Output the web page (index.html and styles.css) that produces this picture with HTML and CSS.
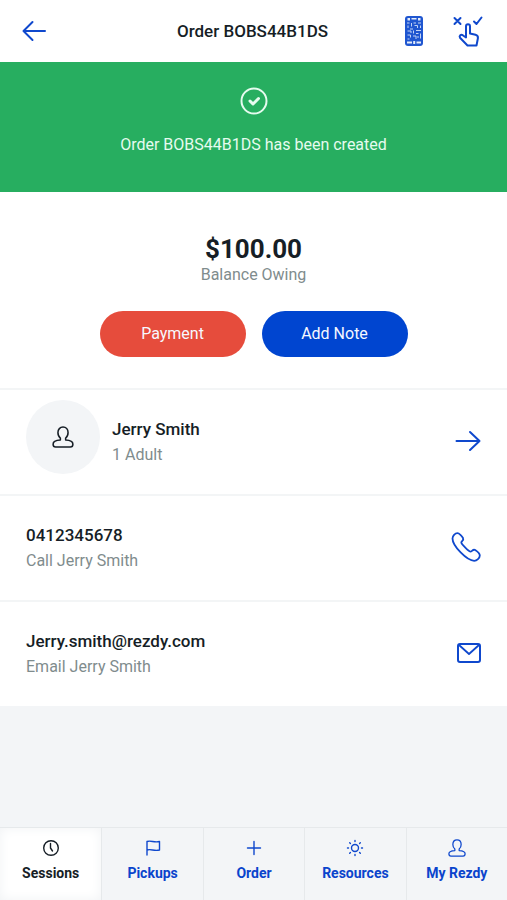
FILE: index.html
```html
<!DOCTYPE html>
<html lang="en">
<head>
<meta charset="utf-8">
<meta name="viewport" content="width=device-width, initial-scale=1">
<title>Order BOBS44B1DS</title>
<link rel="stylesheet" href="styles.css">
</head>
<body>
<svg class="sprite" aria-hidden="true">
  <symbol id="person" viewBox="0 0 20 20">
    <path d="M7.600 12.800v-1.800C6.200 10 5.400 8.200 5.400 6c0-3 1.900-5 4.600-5s4.600 2 4.600 5c0 2.200-.8 4-2.200 5v1.800c4 .2 6.600 1.300 6.600 3.700 0 1.600-.7 2.500-2.300 2.500H3.300C1.700 19 1 18.100 1 16.500c0-2.400 2.600-3.500 6.600-3.700z"/>
  </symbol>
</svg>
<div class="app">
  <header class="topbar">
    <button class="icon-button" type="button" aria-label="Back">
      <svg class="icon" width="24" height="22" viewBox="0 0 24 22"><path class="bold" d="M23 11H1.500M10.500 2l-9 9 9 9"/></svg>
    </button>
    <h1 class="title">Order BOBS44B1DS</h1>
    <div class="tools">
      <button class="icon-button" type="button" aria-label="Scan code">
        <svg class="icon" width="20" height="30" viewBox="0 0 20 30">
          <rect class="fill" x="1" y="0" width="18" height="30" rx="3"/>
          <path class="cut" d="M3.500 2h2.500v2.500H3.500zM7.500 2h5v1.500h-5zM14 2h2.500v2.500H14zM3 25.500h5v2H3zM9.200 25h2v3h-2zM12.500 25.500H17v2h-4.500z"/>
          <path class="code" d="M3 7h2.500M7.500 7v3.500M9.500 7h2.500M14 7h3M4 9.500v2.500M10.500 9.500h3v2.500M16.500 9.500V12M6 13h3M12 14.500h5M3.500 15h3.500v2M9.500 14.500v3M12 17.500h2.500M3.500 19h3v2.500M9 20h3v3M14 20v2M16.500 17.500v5M3.500 23h2"/>
        </svg>
      </button>
      <button class="icon-button" type="button" aria-label="Check in">
        <svg class="icon" width="30" height="31" viewBox="0 0 30 31">
          <path class="bold" d="M1.500 2l6 6M7.500 2l-6 6M21 5.500L23.500 8l5-6.500"/>
          <path class="bold" d="M13 21.500v-11c0-3 4-3 4 0v7l5.500 1.300c2 .5 2.700 1.700 2.400 3.500L23.500 29.500h-9L7 21.800c-1.200-2 1-3.600 2.700-2.600L13 21.500z"/>
        </svg>
      </button>
    </div>
  </header>
  <section class="notice" role="status">
    <svg class="notice-icon" width="28" height="28" viewBox="0 0 28 28"><circle cx="14" cy="14" r="12.500"/><path d="M10 14l3 3 5.500-5.500"/></svg>
    <p class="notice-text">Order BOBS44B1DS has been created</p>
  </section>
  <main>
    <section class="balance">
      <p class="amount">$100.00</p>
      <p class="muted">Balance Owing</p>
      <div class="actions">
        <button class="pill pay" type="button">Payment</button>
        <button class="pill note" type="button">Add Note</button>
      </div>
    </section>
    <a class="row" href="#guest">
      <span class="avatar"><svg class="icon dark" width="22" height="22" viewBox="0 0 20 20"><use href="#person"/></svg></span>
      <span class="details"><strong class="name">Jerry Smith</strong><span class="muted">1 Adult</span></span>
      <span class="row-icon"><svg class="icon" width="26" height="22" viewBox="0 0 26 22"><path class="bold" d="M1.500 11h23M15 2l9.500 9-9.500 9"/></svg></span>
    </a>
    <a class="row" href="tel:0412345678">
      <span class="details"><strong class="name">0412345678</strong><span class="muted">Call Jerry Smith</span></span>
      <span class="row-icon"><svg class="icon" width="30" height="30" viewBox="0 0 30 30"><path class="medium" d="M1.500 6.500C1.500 3.800 4 1.200 6.500 1.200c1.500 0 4.500 3 5.500 4.800 1.200 2.200-1.700 3.300-1.700 4.500 0 1.500 7.700 9.200 9.200 9.200 1.300 0 2.500-3 4.700-1.700 1.500 1 4.600 3.800 4.600 5.500 0 2.500-3 5.300-5.600 5.300C16 28.800 1.500 14 1.500 6.500z"/></svg></span>
    </a>
    <a class="row" href="mailto:Jerry.smith@rezdy.com">
      <span class="details"><strong class="name">Jerry.smith@rezdy.com</strong><span class="muted">Email Jerry Smith</span></span>
      <span class="row-icon"><svg class="icon" width="24" height="20" viewBox="0 0 24 20"><rect class="bold" x="1" y="1" width="22" height="18" rx="2"/><path class="medium" d="M2 2l10 9L22 2"/></svg></span>
    </a>
  </main>
  <nav class="tabs">
    <a class="tab active" href="#sessions" aria-current="page">
      <svg class="icon" width="18" height="18" viewBox="0 0 18 18"><circle cx="9" cy="9" r="7.300"/><path d="M8.500 4.500V9l2 3"/></svg>Sessions</a>
    <a class="tab" href="#pickups">
      <svg class="icon" width="18" height="18" viewBox="0 0 18 18"><path d="M3 16V2.500c4-1.500 7 1.500 12.500 0V11C10 12.500 7 9.500 3 11"/></svg>Pickups</a>
    <a class="tab" href="#order">
      <svg class="icon" width="18" height="18" viewBox="0 0 18 18"><path d="M2.500 9h13M9 2.500v13"/></svg>Order</a>
    <a class="tab" href="#resources">
      <svg class="icon" width="18" height="18" viewBox="0 0 18 18"><circle cx="9" cy="9" r="3.500"/><path d="M9 1.500v1M9 15.500v1M1.500 9h1M15.500 9h1M3.700 3.700l.7.700M13.600 13.600l.7.700M3.700 14.300l.7-.7M13.600 4.400l.7-.7"/></svg>Resources</a>
    <a class="tab" href="#account">
      <svg class="icon" width="18" height="18" viewBox="0 0 20 20"><use href="#person"/></svg>My Rezdy</a>
  </nav>
</div>
</body>
</html>
```
FILE: styles.css
```css
* {
  box-sizing: border-box;
}

body {
  margin: 0;
  background: #f3f5f7;
  color: #161e26;
  font-family: Roboto, "Liberation Sans", sans-serif;
  font-size: 16px;
  line-height: 20px;
}

h1,
p {
  margin: 0;
}

button {
  border: 0;
  font: inherit;
  cursor: pointer;
}

a {
  color: inherit;
  text-decoration: none;
}

.sprite {
  position: absolute;
  width: 0;
  height: 0;
}

.app {
  display: flex;
  flex-direction: column;
  min-height: 100vh;
}

.icon {
  display: block;
  fill: none;
  stroke: #0f48cd;
  stroke-width: 1.4;
  stroke-linecap: round;
  stroke-linejoin: round;
}

.icon.dark {
  stroke: #161e26;
}

.icon .bold {
  stroke-width: 2;
}

.icon .medium {
  stroke-width: 1.8;
}

.icon .fill {
  fill: #1f56d0;
  stroke: none;
}

.icon .cut {
  fill: #e4ecfa;
  stroke: none;
}

.icon .code {
  stroke: #c3d3f4;
  stroke-width: 1;
  stroke-linecap: butt;
  stroke-linejoin: miter;
}

.topbar {
  display: grid;
  grid-template-columns: 1fr auto 1fr;
  align-items: center;
  height: 62px;
  padding: 0 24px 0 22px;
  background: #fff;
}

.icon-button {
  justify-self: start;
  padding: 0;
  background: none;
}

.title {
  font-size: 17px;
  font-weight: 500;
}

.tools {
  display: flex;
  justify-content: flex-end;
  gap: 29px;
}

.notice {
  display: flex;
  flex-direction: column;
  align-items: center;
  gap: 20px;
  padding: 25px 16px 37px;
  background: #27ae60;
  color: #e6fbef;
}

.notice-icon {
  fill: none;
  stroke: #e6fbef;
  stroke-width: 2;
  stroke-linecap: round;
  stroke-linejoin: round;
}

.notice-icon path {
  stroke-width: 3;
}

.balance {
  padding: 41px 16px 31px;
  background: #fff;
  text-align: center;
}

.amount {
  font-size: 26px;
  font-weight: 700;
  line-height: 32px;
}

.muted {
  color: #7f8c8d;
}

.actions {
  display: flex;
  justify-content: center;
  gap: 16px;
  margin-top: 26px;
}

.pill {
  width: 146px;
  height: 46px;
  border-radius: 23px;
  color: #f6f8ff;
}

.pay {
  background: #e64c3c;
}

.note {
  background: #0045d0;
}

.row {
  display: flex;
  align-items: center;
  gap: 12px;
  height: 106px;
  padding: 0 26px;
  border-top: 2px solid #f3f5f6;
  background: #fff;
}

.avatar {
  display: grid;
  place-items: center;
  width: 74px;
  height: 74px;
  margin-bottom: 10px;
  border-radius: 50%;
  background: #f3f5f7;
}

.details {
  display: flex;
  flex: 1;
  flex-direction: column;
  gap: 6px;
}

.row-icon {
  margin-bottom: 3px;
}

.name {
  font-size: 17px;
  font-weight: 500;
}

.tabs {
  display: grid;
  grid-template-columns: repeat(5, 1fr);
  height: 73px;
  margin-top: auto;
  border-top: 1px solid #e6e9eb;
}

.tab {
  display: flex;
  flex-direction: column;
  align-items: center;
  gap: 6px;
  padding-top: 11px;
  color: #0a44cc;
  font-size: 14px;
  font-weight: 700;
}

.tab + .tab {
  border-left: 1px solid #e6e9eb;
}

.tab.active {
  background: #fff;
  box-shadow: inset 0 0 12px #f1f3f5;
  color: #161e26;
}

.tab.active .icon {
  stroke: #161e26;
}
```
